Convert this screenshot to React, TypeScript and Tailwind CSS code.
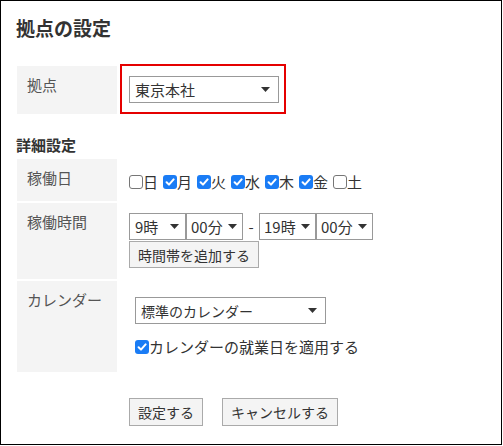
import React from "react";

function Tri() {
  return (
    <svg width="9" height="5" viewBox="0 0 9 5" className="shrink-0">
      <polygon points="0,0 9,0 4.5,5" fill="#333" />
    </svg>
  );
}

function Select({ w, text, size, pl, pr }: { w: string; text: string; size: string; pl: string; pr: string }) {
  return (
    <div className={`${w} h-[27px] border border-[#999] bg-white flex items-center justify-between ${pl} ${pr}`}>
      <span className={`${size} leading-[20px] text-[#333] whitespace-nowrap`}>{text}</span>
      <Tri />
    </div>
  );
}

function Box({ checked }: { checked: boolean }) {
  if (checked) {
    return (
      <span className="w-[14px] h-[14px] rounded-[3px] bg-[#1a7cf5] flex items-center justify-center shrink-0">
        <svg width="10" height="10" viewBox="0 0 10 10">
          <path d="M1.6 5.2 L4 7.6 L8.6 2.4" stroke="white" strokeWidth="2" fill="none" strokeLinecap="round" strokeLinejoin="round" />
        </svg>
      </span>
    );
  }
  return <span className="w-[14px] h-[14px] rounded-[3px] border border-[#767676] bg-white shrink-0" />;
}

const days: [string, boolean][] = [
  ["日", false],
  ["月", true],
  ["火", true],
  ["水", true],
  ["木", true],
  ["金", true],
  ["土", false],
];

export default function App() {
  return (
    <div className="w-[503px] h-[446px] bg-white font-['Noto_Sans_CJK_JP',sans-serif] text-[#333]">
      <div className="w-[502px] h-[445px] border border-black pl-[15px] pt-[15px]">
        <h1 className="text-[19px] font-bold leading-[24px] text-[#333]">拠点の設定</h1>

        <div className="mt-[24px] ml-[1px] flex items-end">
          <div className="w-[100px] h-[48px] bg-[#f4f4f4] pl-[10px] pt-[8px] text-[15px] leading-[21px] text-[#555]">拠点</div>
          <div className="ml-[3px] w-[166px] h-[50px] border-2 border-[#e50000] pt-[10px] pl-[7px]">
            <Select w="w-[150px]" text="東京本社" size="text-[15px]" pl="pl-[5px]" pr="pr-[8px]" />
          </div>
        </div>

        <div className="mt-[21px] text-[15px] font-bold leading-[20px] text-[#333]">詳細設定</div>

        <div className="mt-[4px] ml-[1px] flex flex-col gap-[2px]">
          <div className="flex h-[42px]">
            <div className="w-[100px] h-full bg-[#f4f4f4] pl-[10px] pt-[8px] text-[15px] leading-[21px] text-[#555]">稼働日</div>
            <div className="pl-[12px] pt-[13px] flex items-start gap-[5px]">
              {days.map(([d, c]) => (
                <label key={d} className="flex items-center h-[20px]">
                  <Box checked={c} />
                  <span className="text-[15px] leading-[20px] text-[#333]">{d}</span>
                </label>
              ))}
            </div>
          </div>

          <div className="flex h-[76px]">
            <div className="w-[100px] h-full bg-[#f4f4f4] pl-[10px] pt-[8px] text-[15px] leading-[21px] text-[#555]">稼働時間</div>
            <div className="pl-[12px] pt-[10px] flex flex-col items-start">
              <div className="flex items-center">
                <Select w="w-[57px]" text="9時" size="text-[15px]" pl="pl-[5px]" pr="pr-[6px]" />
                <Select w="w-[57px]" text="00分" size="text-[15px]" pl="pl-[4px]" pr="pr-[5px]" />
                <span className="w-[16px] text-center text-[15px] leading-[20px] text-[#333]">-</span>
                <Select w="w-[57px]" text="19時" size="text-[15px]" pl="pl-[4px]" pr="pr-[5px]" />
                <Select w="w-[57px]" text="00分" size="text-[15px]" pl="pl-[4px]" pr="pr-[5px]" />
              </div>
              <button className="mt-[1px] h-[27px] px-[8px] border border-[#aaa] bg-[#f4f4f4] text-[14px] leading-[20px] text-[#333]">時間帯を追加する</button>
            </div>
          </div>

          <div className="flex h-[91px]">
            <div className="w-[100px] h-full bg-[#f4f4f4] pl-[10px] pt-[8px] text-[15px] leading-[21px] text-[#555]">カレンダー</div>
            <div className="pl-[18px] pt-[16px] flex flex-col items-start">
              <Select w="w-[191px]" text="標準のカレンダー" size="text-[14px]" pl="pl-[5px]" pr="pr-[8px]" />
              <label className="mt-[12px] flex items-center h-[22px]">
                <Box checked={true} />
                <span className="text-[15px] leading-[22px] text-[#333]">カレンダーの就業日を適用する</span>
              </label>
            </div>
          </div>
        </div>

        <div className="mt-[26px] ml-[113px] flex gap-[19px]">
          <button className="w-[74px] h-[28px] border border-[#aaa] bg-[#f4f4f4] text-[14px] leading-[20px] text-[#333]">設定する</button>
          <button className="w-[116px] h-[28px] border border-[#aaa] bg-[#f4f4f4] text-[14px] leading-[20px] text-[#333]">キャンセルする</button>
        </div>
      </div>
    </div>
  );
}
